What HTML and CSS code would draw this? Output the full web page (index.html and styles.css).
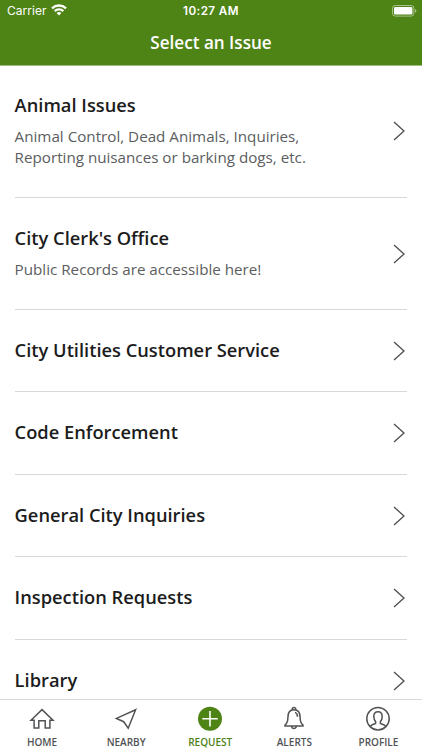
FILE: index.html
```html
<!DOCTYPE html>
<html lang="en">
<head>
<meta charset="utf-8">
<title>Select an Issue</title>
<link rel="stylesheet" href="styles.css">
</head>
<body>
<div class="app">
  <header class="header">
    <div class="status">
      <div class="carrier"><span>Carrier</span>
        <svg class="wifi" width="16" height="12" viewBox="0 0 16 12" fill="none" stroke="#fff" stroke-width="2.3"><path d="M1 4.3a10.2 10.2 0 0 1 14 0M3.7 7.1a6.3 6.3 0 0 1 8.6 0"/><path d="M8 11.4 5.6 9.1a3.5 3.5 0 0 1 4.8 0Z" fill="#fff" stroke="none"/></svg>
      </div>
      <time>10:27 AM</time>
      <svg class="battery" width="26" height="12" viewBox="0 0 26 12"><rect x=".5" y=".5" width="21.4" height="10.6" rx="2.8" fill="none" stroke="#fff" stroke-opacity=".5"/><rect x="2" y="2" width="18.4" height="7.6" rx="1.4" fill="#fff"/><path d="M23 4v3.7q1.4-.5 1.4-1.85T23 4Z" fill="#fff" fill-opacity=".5"/></svg>
    </div>
    <h1>Select an Issue</h1>
  </header>
  <main class="list">
    <a class="row"><div class="copy"><h2>Animal Issues</h2><p>Animal Control, Dead Animals, Inquiries,<br>Reporting nuisances or barking dogs, etc.</p></div><svg class="chevron" viewBox="0 0 12 20"><path d="m1 1 10 9-10 9"/></svg></a>
    <a class="row"><div class="copy"><h2>City Clerk's Office</h2><p>Public Records are accessible here!</p></div><svg class="chevron" viewBox="0 0 12 20"><path d="m1 1 10 9-10 9"/></svg></a>
    <a class="row"><div class="copy"><h2>City Utilities Customer Service</h2></div><svg class="chevron" viewBox="0 0 12 20"><path d="m1 1 10 9-10 9"/></svg></a>
    <a class="row"><div class="copy"><h2>Code Enforcement</h2></div><svg class="chevron" viewBox="0 0 12 20"><path d="m1 1 10 9-10 9"/></svg></a>
    <a class="row"><div class="copy"><h2>General City Inquiries</h2></div><svg class="chevron" viewBox="0 0 12 20"><path d="m1 1 10 9-10 9"/></svg></a>
    <a class="row"><div class="copy"><h2>Inspection Requests</h2></div><svg class="chevron" viewBox="0 0 12 20"><path d="m1 1 10 9-10 9"/></svg></a>
    <a class="row"><div class="copy"><h2>Library</h2></div><svg class="chevron" viewBox="0 0 12 20"><path d="m1 1 10 9-10 9"/></svg></a>
  </main>
  <nav class="tabs">
    <a class="tab"><svg viewBox="0 0 26 26"><path d="M2 14.2 13 3.6l11 10.6h-3.1v7.9h-4.7v-7.3H9.8v7.3H5.1v-7.9Z"/></svg><span>HOME</span></a>
    <a class="tab"><svg viewBox="0 0 26 26"><path d="M22.6 3.8 3.4 12.4l7.3 3.3 4.5 6.5Z"/></svg><span>NEARBY</span></a>
    <a class="tab active"><svg viewBox="0 0 26 26"><circle class="disc" cx="13" cy="12.7" r="12"/><path class="plus" d="M13 5v15.4M5.3 12.7h15.4"/></svg><span>REQUEST</span></a>
    <a class="tab"><svg viewBox="0 0 26 26"><path d="M11.2 3.7v-.5a1.8 1.8 0 0 1 3.6 0v.5M4 20v-1c2.5-2 2.9-4.3 2.9-7.6 0-4.8 2.3-7.7 6.1-7.7s6.1 2.9 6.1 7.7c0 3.3.4 5.6 2.9 7.6v1ZM10.7 20.2a2.3 2.3 0 0 0 4.6 0M14 6.4c1.7.5 2.4 2 2.5 4.3"/></svg><span>ALERTS</span></a>
    <a class="tab"><svg viewBox="0 0 26 26"><circle cx="13" cy="12.7" r="11.2"/><path d="M5.2 20.5c.8-1.7 2.4-2.4 5.4-3.1v-1.8c-1.5-1.5-1.8-3-1.8-5 0-3.2 1.5-4.8 4.2-4.8s4.2 1.6 4.2 4.8c0 2-.3 3.5-1.8 5v1.8c3 .7 4.6 1.4 5.4 3.1"/></svg><span>PROFILE</span></a>
  </nav>
</div>
</body>
</html>
```

FILE: styles.css
```css
* { box-sizing: border-box; }
body { margin: 0; background: #fff; font-family: "Open Sans", sans-serif; }
h1, h2, p { margin: 0; }
.app { width: 422px; height: 750px; display: flex; flex-direction: column; overflow: hidden; }
.header { flex: none; height: 66px; background: #4e8315; border-bottom: 1px solid #a0bd80; color: #fff; }
.status { height: 22px; padding: 0 5px 0 7px; display: grid; grid-template-columns: 1fr auto 1fr; align-items: center; font: 400 12px/22px Inter, sans-serif; }
.carrier { display: flex; align-items: center; gap: 4px; letter-spacing: .05px; }
.wifi { margin-top: -2px; }
.status time { font-weight: 600; font-size: 11.7px; letter-spacing: .4px; margin-left: -2px; }
.battery { justify-self: end; margin: -1px -1px 0 0; }
h1 { text-align: center; font-size: 17.1px; line-height: 24px; font-weight: 600; margin-top: 9px; }
.list { flex: 1; min-height: 0; overflow: hidden; padding: 0 15px; margin-top: -1px; }
.row { display: flex; justify-content: space-between; align-items: center; padding: 28px 0 29.5px; border-bottom: 1px solid #d8d8d8; }
h2 { font-size: 18.3px; line-height: 24px; font-weight: 600; color: #1c1c1c; margin-left: -.4px; }
.row p { margin: 8.6px 0 -.2px -.4px; font-size: 15.2px; line-height: 21px; color: #5b5d60; }
.chevron { width: 12px; height: 20px; margin: 2px 2px 0 0; flex: none; fill: none; stroke: #4c4e50; stroke-width: 1.3; }
.tabs { flex: none; height: 51px; border-top: 1px solid #d8d8d8; background: #fff; display: grid; grid-template-columns: repeat(5, 1fr); padding-right: 1.5px; }
.tab { display: flex; flex-direction: column; align-items: center; padding-top: 6px; color: #515355; font-size: 10px; line-height: 14px; font-weight: 600; }
.tab svg { width: 26px; height: 26px; fill: none; stroke: currentColor; stroke-width: 1.5; }
.tab span { margin-top: 3px; }
.tab.active { color: #4e8315; }
.tab .disc { fill: #4e8315; stroke: none; }
.tab .plus { stroke: #fff; stroke-width: 1.6; }
```
